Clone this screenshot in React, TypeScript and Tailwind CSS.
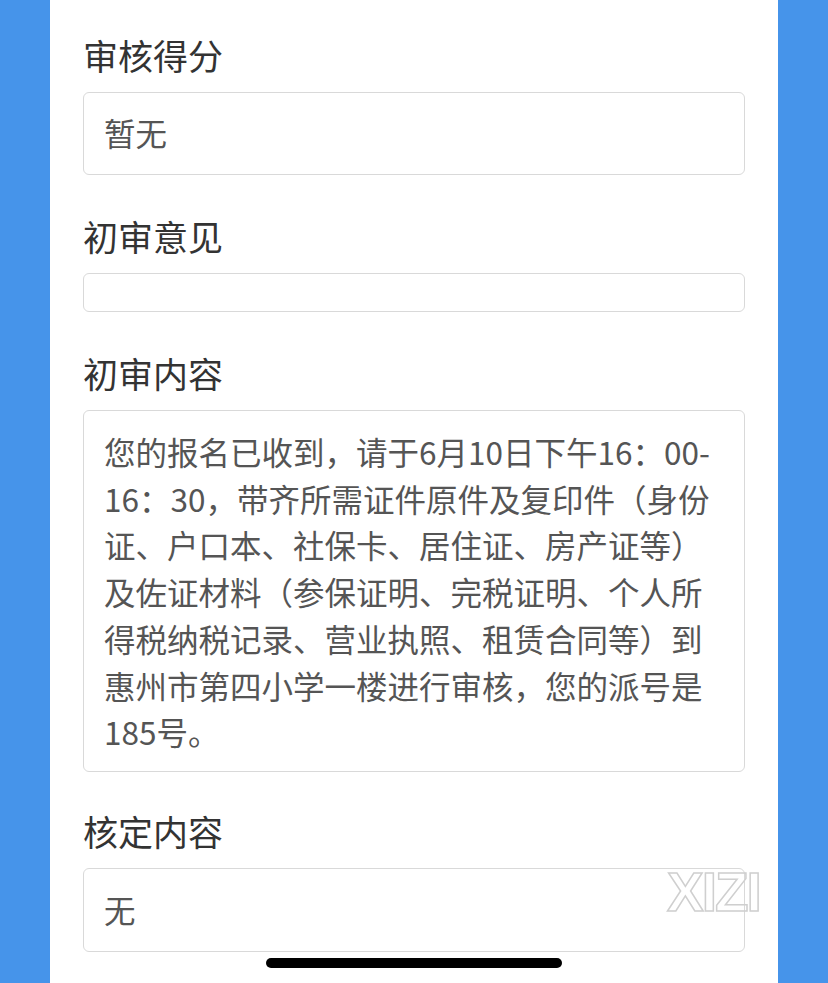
import React from "react";

const lines = [
  "您的报名已收到，请于6月10日下午16：00-",
  "16：30，带齐所需证件原件及复印件（身份",
  "证、户口本、社保卡、居住证、房产证等）",
  "及佐证材料（参保证明、完税证明、个人所",
  "得税纳税记录、营业执照、租赁合同等）到",
  "惠州市第四小学一楼进行审核，您的派号是",
  "185号。",
];

const Label: React.FC<{ text: string }> = ({ text }) => (
  <div className="h-[40px] leading-[40px] text-[35px] text-[#333] mb-[17px]">{text}</div>
);

const App: React.FC = () => {
  return (
    <div
      className="relative w-full h-[983px] overflow-hidden bg-[#4694ea] flex justify-center"
      style={{ fontFamily: '"Noto Sans CJK SC", "Noto Sans", sans-serif' }}
    >
      <div className="w-[728px] h-full bg-white px-[33px] pt-[35px]">
        <Label text="审核得分" />
        <div className="border-[1.5px] border-[#d9d9d9] rounded-[6px] px-[20px] pt-[16px] pb-[19px] leading-[46px] text-[31.5px] text-[#555] mb-[41px]">
          暂无
        </div>

        <Label text="初审意见" />
        <div className="border-[1.5px] border-[#d9d9d9] rounded-[6px] h-[39px] mb-[41px]" />

        <Label text="初审内容" />
        <div className="border-[1.5px] border-[#d9d9d9] rounded-[6px] px-[20px] pt-[17px] pb-[16px] leading-[46.7px] text-[31.5px] text-[#555] mb-[39px]">
          {lines.map((l) => (
            <div key={l} className="whitespace-nowrap">
              {l}
            </div>
          ))}
        </div>

        <Label text="核定内容" />
        <div className="border-[1.5px] border-[#d9d9d9] rounded-[6px] px-[20px] pt-[17px] pb-[19px] leading-[46px] text-[31.5px] text-[#555]">
          无
        </div>
      </div>

      <div
        className="absolute left-[667px] top-[865px] text-[55px] font-bold leading-none tracking-[-2px] text-transparent [-webkit-text-stroke:1.5px_#cfcfcf] select-none"
        style={{ fontFamily: '"Liberation Sans", sans-serif' }}
      >
        XIZI
      </div>

      <div className="absolute left-[266px] top-[958px] w-[296px] h-[10px] rounded-full bg-black" />
    </div>
  );
};

export default App;
